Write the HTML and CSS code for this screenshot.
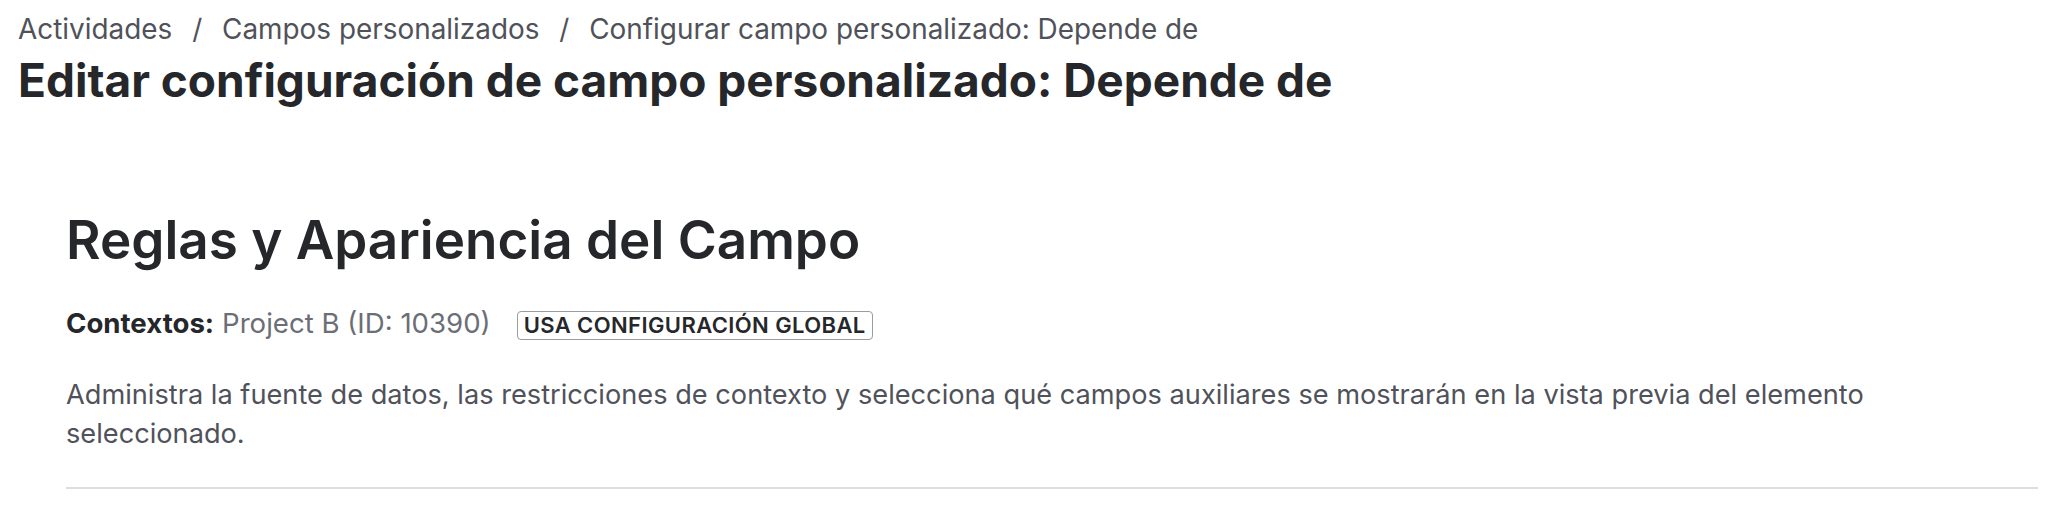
FILE: index.html
```html
<!DOCTYPE html>
<html>
<head>
<meta name="viewport" content="width=device-width, initial-scale=1">
<link rel="stylesheet" href="styles.css">
<title>Editar configuración de campo personalizado</title>
</head>
<body>

<div class="page">
    <nav class="breadcrumb">
        <a href="#">Actividades</a>
        <span class="sep">/</span>
        <a href="#">Campos personalizados</a>
        <span class="sep">/</span>
        <span>Configurar campo personalizado: Depende de</span>
    </nav>
    <h1 class="page-title">Editar configuración de campo personalizado: Depende de</h1>

    <section class="panel">
        <h2 class="panel-title">Reglas y Apariencia del Campo</h2>
        <div class="contexts">
            <span class="contexts-label">Contextos:</span>
            <span class="contexts-value">Project B (ID: 10390)</span>
            <span class="badge">USA CONFIGURACIÓN GLOBAL</span>
        </div>
        <p class="description">Administra la fuente de datos, las restricciones de contexto y selecciona qué campos auxiliares se mostrarán en la vista previa del elemento seleccionado.</p>
        <hr class="divider">
    </section>
</div>

</body>
</html>
```

FILE: styles.css
```css
body {
    margin: 0;
    background-color: #ffffff;
    font-family: Inter, "Noto Sans", sans-serif;
    color: #26272b;
}

.page {
    padding: 12px 24px 0 18px;
}

.breadcrumb {
    font-size: 27.9px;
    line-height: 34px;
    color: #50525a;
}

.breadcrumb a {
    color: inherit;
    text-decoration: none;
}

.breadcrumb .sep {
    margin: 0 12px;
}

.page-title {
    margin: 7px 0 0 0;
    font-size: 46px;
    line-height: 54px;
    font-weight: 700;
}

.panel {
    margin-left: 48px;
}

.panel-title {
    margin: 101px 0 0 0;
    font-size: 53px;
    line-height: 64px;
    font-weight: 600;
}

.contexts {
    margin-top: 33px;
    display: flex;
    align-items: center;
    font-size: 27.6px;
    line-height: 34px;
}

.contexts-label {
    font-weight: 700;
}

.contexts-value {
    margin-left: 8px;
    color: #6b6e76;
}

.badge {
    margin: 6px 0 0 26px;
    padding: 0 6px;
    border: 1.5px solid #9a9ca2;
    border-radius: 4px;
    font-size: 22px;
    line-height: 27px;
    font-weight: 600;
    letter-spacing: 0.4px;
}

.description {
    max-width: 1900px;
    margin: 35px 0 0 0;
    font-size: 27.2px;
    line-height: 39px;
    color: #50525a;
}

.divider {
    margin: 34px 0 0 0;
    border: none;
    border-top: 2px solid #dedede;
}
```
